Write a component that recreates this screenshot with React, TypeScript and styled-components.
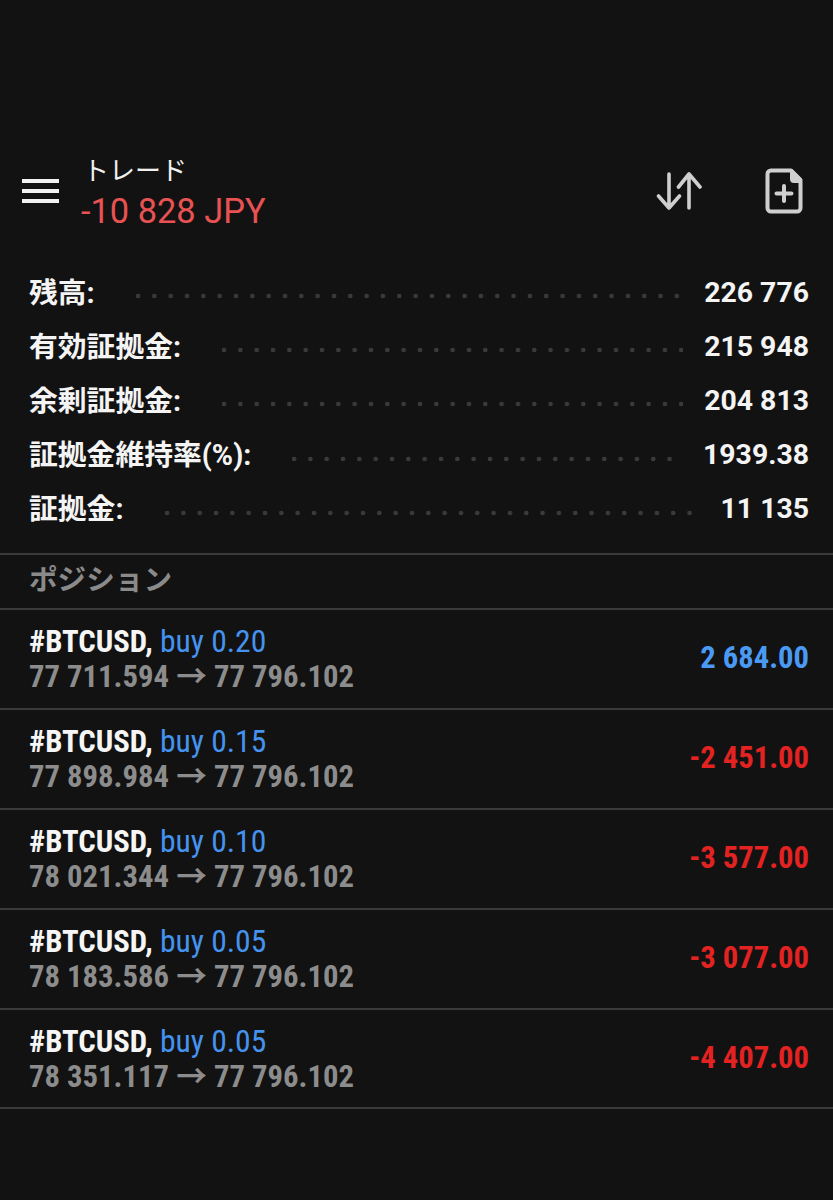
import React from 'react';
import styled, { createGlobalStyle } from 'styled-components';

const GlobalStyle = createGlobalStyle`
  html, body {
    margin: 0;
    padding: 0;
    background: #121212;
  }
  body {
    font-family: Roboto, "Noto Sans CJK JP", sans-serif;
  }
`;

const summary = [
  { label: '残高:', value: '226 776' },
  { label: '有効証拠金:', value: '215 948' },
  { label: '余剰証拠金:', value: '204 813' },
  { label: '証拠金維持率(%):', value: '1939.38' },
  { label: '証拠金:', value: '11 135' }
];

const positions = [
  { lot: '0.20', open: '77 711.594', profit: '2 684.00', gain: true },
  { lot: '0.15', open: '77 898.984', profit: '-2 451.00', gain: false },
  { lot: '0.10', open: '78 021.344', profit: '-3 577.00', gain: false },
  { lot: '0.05', open: '78 183.586', profit: '-3 077.00', gain: false },
  { lot: '0.05', open: '78 351.117', profit: '-4 407.00', gain: false }
];

const Page = styled.div`
  width: 833px;
  height: 1200px;
  background: #121212;
  padding-top: 152px;
  box-sizing: border-box;
  overflow: hidden;
`;

const Toolbar = styled.header`
  display: flex;
  align-items: center;
  height: 80px;
  padding: 0 30px 0 22px;
`;

const Burger = styled.div`
  display: flex;
  flex-direction: column;
  gap: 6px;
  width: 37px;
  margin: 0 22px 2px 0;
  span {
    height: 4px;
    background: #f2f2f2;
  }
`;

const TitleBox = styled.div`
  flex: 1;
  display: flex;
  flex-direction: column;
  padding-top: 3px;
`;

const Title = styled.div`
  font-size: 26px;
  line-height: 34px;
  color: #f0f0f0;
  margin-left: 2px;
`;

const Balance = styled.div`
  font-size: 34.4px;
  line-height: 46px;
  color: #e85252;
`;

const Actions = styled.div`
  display: flex;
  align-items: center;
  gap: 63px;
  margin-bottom: 3px;
`;

const Summary = styled.section`
  padding: 33px 24px 0 29px;
  height: 321px;
  box-sizing: border-box;
`;

const SummaryRow = styled.div`
  display: flex;
  align-items: center;
  height: 54.2px;
`;

const SummaryLabel = styled.span`
  font-size: 28.8px;
  font-weight: 700;
  color: #f4f4f4;
  margin-bottom: 4px;
`;

const Dots = styled.span`
  flex: 1;
  height: 6px;
  margin: 8px 21px 0 40px;
  background-image: radial-gradient(circle at 3px 3px, #3a3a3a 2px, transparent 2.6px);
  background-size: 16.33px 6px;
  background-repeat: repeat-x;
`;

const SummaryValue = styled.span`
  font-size: 28.4px;
  font-weight: 700;
  color: #f4f4f4;
`;

const SectionHead = styled.div`
  height: 55px;
  box-sizing: border-box;
  border-top: 2px solid #3a3a3a;
  padding-left: 29px;
  font-size: 28.6px;
  line-height: 50px;
  font-weight: 700;
  color: #8a8a8a;
`;

const Row = styled.div`
  display: flex;
  align-items: center;
  justify-content: space-between;
  height: 100px;
  box-sizing: border-box;
  border-top: 2px solid #3a3a3a;
  padding: 0 24px 0 29px;
  &:last-child {
    height: 101px;
    border-bottom: 2px solid #3a3a3a;
  }
`;

const Narrow = styled.span`
  display: block;
  font-stretch: condensed;
  white-space: nowrap;
`;

const Line = styled(Narrow)`
  font-size: 30.7px;
  line-height: 35px;
`;

const Symbol = styled.span`
  font-weight: 700;
  color: #f6f6f6;
`;

const Lot = styled.span`
  font-size: 31.6px;
  color: #4593ee;
`;

const Prices = styled(Line)`
  font-weight: 700;
  color: #8c8c8c;
`;

const Profit = styled(Narrow)<{ $gain: boolean }>`
  font-size: 30.6px;
  font-weight: 700;
  margin-bottom: 3px;
  color: ${p => (p.$gain ? '#4a9af5' : '#e32222')};
`;

const SortIcon = () => (
  <svg width="46" height="38" viewBox="0 0 46 38" fill="none" stroke="#cfcfcf" strokeWidth="3.6" strokeLinecap="round" strokeLinejoin="round">
    <path d="M13 2v34M2.500 24 13 36l10.500-12" />
    <path d="M33 36V2M22.500 15 33 2l11 13" />
  </svg>
);

const NewFileIcon = () => (
  <svg width="38" height="46" viewBox="0 0 38 46" fill="none">
    <path d="M6 2.500h20L35.500 12v28a3.500 3.500 0 0 1-3.500 3.500H6A3.500 3.500 0 0 1 2.500 40V6A3.500 3.500 0 0 1 6 2.500z" stroke="#cfcfcf" strokeWidth="4" strokeLinejoin="round" />
    <path d="M25 1h2l10 10v4H29a4 4 0 0 1-4-4z" fill="#cfcfcf" />
    <path d="M19 18v15M11.500 25.500h15" stroke="#cfcfcf" strokeWidth="4" strokeLinecap="round" />
  </svg>
);

export default function App() {
  return (
    <Page>
      <GlobalStyle />
      <Toolbar>
        <Burger>
          <span />
          <span />
          <span />
        </Burger>
        <TitleBox>
          <Title>トレード</Title>
          <Balance>-10 828 JPY</Balance>
        </TitleBox>
        <Actions>
          <SortIcon />
          <NewFileIcon />
        </Actions>
      </Toolbar>

      <Summary>
        {summary.map(item => (
          <SummaryRow key={item.label}>
            <SummaryLabel>{item.label}</SummaryLabel>
            <Dots />
            <SummaryValue>{item.value}</SummaryValue>
          </SummaryRow>
        ))}
      </Summary>

      <SectionHead>ポジション</SectionHead>

      {positions.map(pos => (
        <Row key={pos.open}>
          <div>
            <Line>
              <Symbol>#BTCUSD,</Symbol> <Lot>buy {pos.lot}</Lot>
            </Line>
            <Prices>{pos.open} → 77 796.102</Prices>
          </div>
          <Profit $gain={pos.gain}>{pos.profit}</Profit>
        </Row>
      ))}
    </Page>
  );
}
